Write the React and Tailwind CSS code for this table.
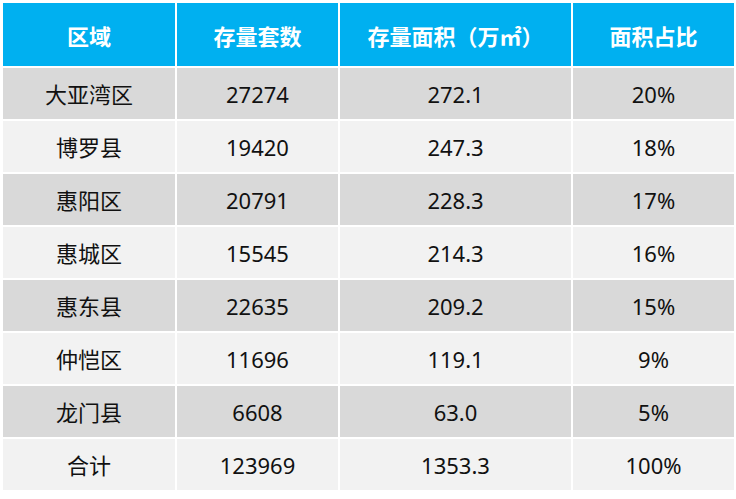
const HEAD = ["区域", "存量套数", "存量面积（万㎡）", "面积占比"];

const ROWS = [
  ["大亚湾区", "27274", "272.1", "20%"],
  ["博罗县", "19420", "247.3", "18%"],
  ["惠阳区", "20791", "228.3", "17%"],
  ["惠城区", "15545", "214.3", "16%"],
  ["惠东县", "22635", "209.2", "15%"],
  ["仲恺区", "11696", "119.1", "9%"],
  ["龙门县", "6608", "63.0", "5%"],
  ["合计", "123969", "1353.3", "100%"],
];

const WIDTHS = ["w-[172px]", "w-[161px]", "w-[231px]", "w-[161px]"];

export default function App() {
  return (
    <div
      className="min-h-screen w-[736px] h-[499px] bg-white pl-[1px] pt-[1px]"
      style={{ fontFamily: '"Noto Sans", "Noto Sans CJK SC", sans-serif' }}
    >
      <table className="border-separate border-spacing-[2px] text-center text-[22px]">
        <thead>
          <tr className="h-[63px] bg-[#00b0f0] text-white font-bold">
            {HEAD.map((h, i) => (
              <th key={h} className={`${WIDTHS[i]} p-0 pt-[4px] font-bold`}>
                {h}
              </th>
            ))}
          </tr>
        </thead>
        <tbody>
          {ROWS.map((r, idx) => (
            <tr
              key={r[0]}
              className={`h-[51px] text-[#111] ${idx % 2 === 0 ? "bg-[#d9d9d9]" : "bg-[#f2f2f2]"}`}
            >
              {r.map((c, i) => (
                <td key={i} className="p-0 pt-[2px]">
                  {c}
                </td>
              ))}
            </tr>
          ))}
        </tbody>
      </table>
    </div>
  );
}
